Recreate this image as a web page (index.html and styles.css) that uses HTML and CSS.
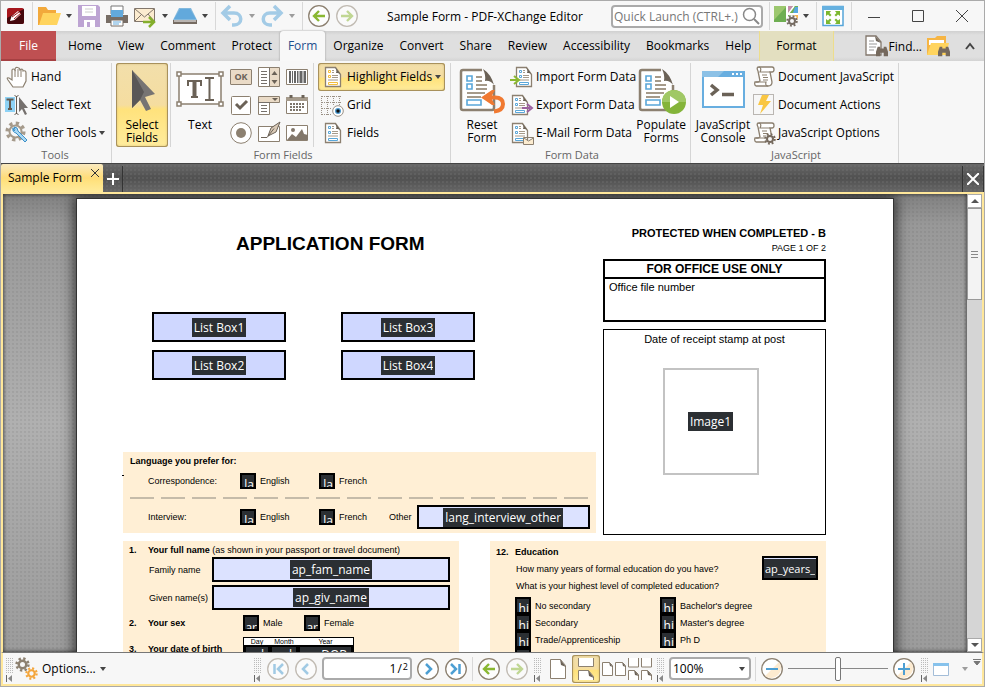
FILE: index.html
```html
<!DOCTYPE html>
<html lang="en">
<head>
    <meta charset="UTF-8">
    <meta name="viewport" content="width=device-width, initial-scale=1.0">
    <title>Sample Form - PDF-XChange Editor</title>
    <link rel="stylesheet" href="styles.css">
</head>
<body>
<!-- shared icons -->
<svg class="defs" aria-hidden="true">
    <symbol id="doc" viewBox="0 0 24 24">
        <path d="M4.500 2.500h10l5 7v12h-15z" fill="#fff" stroke="#8c8070" stroke-width="1.300"/>
        <path d="M14 2l6 8c-1-2-3-2-5-2 1-2 0-4-1-6z" fill="#6b6257"/>
        <path d="M7.500 5.500h2v2h-2zM7.500 10.500h2v2h-2zM7.500 17.500h9v2h-9z" fill="#fff" stroke="currentColor"/>
        <path d="M11 5.500h2M11 7.500h2M11 10.500h6M11 12.500h6M7 15h10" stroke="#a59a8a"/>
    </symbol>
    <symbol id="bigdoc" viewBox="0 0 48 48">
        <path d="M24 4H5q-2 0-2 2v36q0 2 2 2h29q2 0 2-2V19" fill="#fff" stroke="#8c8070" stroke-width="2.500"/>
        <path d="M25 3q8 5 11 16-4-5-9-4 1-6-2-12z" fill="#6b6257"/>
        <path d="M9 10h5v5H9zM9 18h5v5H9zM9 34h14v5H9z" fill="#fff" stroke="#5aa7d9" stroke-width="1.600"/>
        <path d="M18 11h6M18 15h6M18 19h11M18 23h11M9 27h18M9 31h14" stroke="#a59a8a" stroke-width="2"/>
    </symbol>
    <symbol id="gear" viewBox="0 0 24 24">
        <circle cx="12" cy="12" r="6" fill="none" stroke="currentColor" stroke-width="4"/>
        <circle cx="12" cy="12" r="9.500" fill="none" stroke="currentColor" stroke-width="4" stroke-dasharray="3.700 3.760"/>
    </symbol>
    <symbol id="caret" viewBox="0 0 8 8"><path d="M1 2h6L4 6z" fill="currentColor"/></symbol>
    <symbol id="binoc" viewBox="0 0 14 14"><path d="M2 2h3v2h4V2h3l2 6v5H9V9H5v4H0V8z" fill="#75695d"/></symbol>
    <symbol id="scroll" viewBox="0 0 24 24">
        <path d="M7 2h13q2 0 2 2.500T20 7h-2l2 10c0 3-2 4-4 4H4q-2-1-1-4h3l2-1L6 6Q4 2 7 2z" fill="#fff" stroke="#8c8070" stroke-width="1.300"/>
        <path d="M7 2q3 1 1 5h10M4 17h10q-1 4 2 4M10 10h5M11 12.500h5M11 15h5" fill="none" stroke="#8c8070" stroke-width="1.200"/>
    </symbol>
    <symbol id="left" viewBox="0 0 24 24">
        <circle cx="12" cy="12" r="10.300" fill="#fdfdfd" stroke="#8c8070" stroke-width="1.300"/>
        <path d="M18 12H8M12 7l-5 5 5 5" fill="none" stroke="#8ab832" stroke-width="2.400"/>
    </symbol>
    <symbol id="right" viewBox="0 0 24 24">
        <circle cx="12" cy="12" r="10.300" fill="#fdfdfd" stroke="#8c8070" stroke-width="1.300"/>
        <path d="M6 12h10M12 7l5 5-5 5" fill="none" stroke="#8ab832" stroke-width="2.400"/>
    </symbol>
    <symbol id="grip" viewBox="0 0 9 26">
        <path d="M1.500 2v16M3.500 2v16M5.500 2v16M7.500 2v16" stroke="#bbb" stroke-dasharray="1 1"/>
        <path d="M1.500 19v7" stroke="#666"/><path d="M7 19v7l-4-3.500z" fill="#888"/>
    </symbol>
</svg>

<div class="window">
    <header class="titlebar">
        <div class="quick">
            <svg class="logo" viewBox="0 0 20 20"><rect x="1" y="2" width="17" height="16" rx="2" fill="#a5161c"/><path d="M1 12L18 3v13q0 2-2 2H3q-2 0-2-2z" fill="#45080c"/><path d="M4 15l1.500-4.500L12 5l3 3-6.500 6z" fill="#fff"/><path d="M6 11l7-5M8 13l7-6" stroke="#a5161c"/></svg>
            <span class="sep"></span>
            <button class="tool" aria-label="Open"><svg viewBox="0 0 24 24"><path d="M1 3h8l2 3h8v5L3 21H1z" fill="#f2a93b"/><path d="M6 9h18l-4 12H2z" fill="#ffd45e"/></svg></button>
            <button class="drop" aria-label="Open recent"><svg><use href="#caret"/></svg></button>
            <button class="tool" aria-label="Save"><svg viewBox="0 0 24 24"><path d="M1 1h20l2 2v20H1z" fill="#bda4d3"/><path d="M5 2h14v10H5zM7 16h11v7H7z" fill="#fff"/><path d="M8 5h8M8 8h8" stroke="#ccc"/><path d="M10 18h3v5h-3z" fill="#bda4d3"/></svg></button>
            <button class="tool" aria-label="Print"><svg viewBox="0 0 24 24"><path d="M6 2h12v8H6z" fill="#fff" stroke="#777"/><path d="M1 11h22v8H1z" fill="#776d65"/><path d="M6 6h12v7H6z" fill="#62a9dc"/><path d="M6 16h12v6H6z" fill="#fff" stroke="#776d65"/><path d="M8 18h8M8 20h6" stroke="#62a9dc"/></svg></button>
            <button class="tool" aria-label="E-mail"><svg viewBox="0 0 24 24"><path d="M1.500 4.500h20v13h-20z" fill="#fcecd0" stroke="#82776c"/><path d="M2 5l9.500 8L21 5M2 17l7-7M21 17l-6-7" fill="none" stroke="#82776c"/><path d="M10 18h10M16 13l5 5-5 5" fill="none" stroke="#84af2d" stroke-width="2.500"/></svg></button>
            <button class="drop" aria-label="E-mail menu"><svg><use href="#caret"/></svg></button>
            <button class="tool" aria-label="Scan"><svg viewBox="0 0 24 24"><path d="M6 4h12l6 12v4H0v-4z" fill="#83b9dd"/><path d="M7 5h10l6 10H1z" fill="#62a9dc"/><path d="M0 16h24v4H0z" fill="#756b62"/><path d="M1 17h22" stroke="#fff"/></svg></button>
            <button class="drop" aria-label="Scan menu"><svg><use href="#caret"/></svg></button>
            <span class="sep"></span>
            <button class="tool" aria-label="Undo"><svg viewBox="0 0 24 24"><path d="M4 9h10c9 0 9 12 0 12h-2M10 2L3 9l7 7" fill="none" stroke="#a3cbe6" stroke-width="3.500"/></svg></button>
            <button class="drop dim" aria-label="Undo list"><svg><use href="#caret"/></svg></button>
            <button class="tool" aria-label="Redo"><svg viewBox="0 0 24 24"><path d="M20 9H10C1 9 1 21 10 21h2M14 2l7 7-7 7" fill="none" stroke="#a3cbe6" stroke-width="3.500"/></svg></button>
            <button class="drop dim" aria-label="Redo list"><svg><use href="#caret"/></svg></button>
            <span class="sep"></span>
            <button class="tool" aria-label="Previous view"><svg><use href="#left"/></svg></button>
            <button class="tool dim" aria-label="Next view"><svg><use href="#right"/></svg></button>
        </div>
        <div class="caption">Sample Form - PDF-XChange Editor</div>
        <div class="quick">
            <label class="search">
                <input type="text" placeholder="Quick Launch (CTRL+.)" aria-label="Quick Launch">
                <svg viewBox="0 0 18 18"><circle cx="7.500" cy="7.500" r="6" fill="none" stroke="#888" stroke-width="1.500"/><path d="M12 12l5 5" stroke="#888" stroke-width="2"/></svg>
            </label>
            <span class="sep"></span>
            <button class="tool" aria-label="Customize"><svg viewBox="0 0 24 24"><path d="M0 2h24v16H0z" fill="#6eae52"/><path d="M0 2h13L0 16z" fill="#9cc76e"/><path d="M13 2v16M13 10h11M20 2l-7 9" stroke="#fff" stroke-width="2"/><path d="M21 3h3v6h-5z" fill="#56a8e0"/><path d="M14 2h5l-5 7z" fill="#c48da9"/><path d="M19 11h5v7h-5z" fill="#f7b64d"/><circle cx="18" cy="17" r="6" fill="#f7f7f7"/><use href="#gear" x="12" y="11" width="12" height="12" color="#756b62"/></svg></button>
            <button class="drop" aria-label="Customize menu"><svg><use href="#caret"/></svg></button>
            <span class="sep"></span>
            <button class="tool" aria-label="Full screen"><svg viewBox="0 0 24 24"><path d="M2 2.500h20v19H2z" fill="#fff" stroke="#55a5d9" stroke-width="1.500"/><path d="M1 2h22v4H1z" fill="#66b1e0"/><path d="M5 7h5L8.500 9l2 2-1.500 1.500-2-2L5 12zM19 7h-5l1.500 2-2 2 1.500 1.500 2-2 2 1.500zM5 20h5l-1.500-2 2-2L9 14.500l-2 2L5 15zM19 20h-5l1.500-2-2-2 1.500-1.500 2 2 2-1.500z" fill="#7cb82f"/></svg></button>
            <span class="sep"></span>
            <div class="wincontrols">
                <button aria-label="Minimize"><svg viewBox="0 0 12 12"><path d="M0 7.500h12"/></svg></button>
                <button aria-label="Maximize"><svg viewBox="0 0 12 12"><path d="M.5.5h11v11H.5z"/></svg></button>
                <button aria-label="Close"><svg viewBox="0 0 12 12"><path d="M0 0l12 12M12 0L0 12"/></svg></button>
            </div>
        </div>
    </header>

    <nav class="tabs">
        <button class="file">File</button>
        <button>Home</button>
        <button>View</button>
        <button>Comment</button>
        <button>Protect</button>
        <button class="active">Form</button>
        <button>Organize</button>
        <button>Convert</button>
        <button>Share</button>
        <button>Review</button>
        <button>Accessibility</button>
        <button>Bookmarks</button>
        <button>Help</button>
        <button class="format">Format</button>
        <div class="tabs-end">
            <button class="find"><svg viewBox="0 0 24 24"><path d="M2 2h10l5 6v13H2z" fill="#fff" stroke="#82776c" stroke-width="1.300"/><path d="M11 2l6 7-5-2z" fill="#6b6257"/><path d="M5 7h5M5 10h8M5 13h7M5 16h5" stroke="#999"/><use href="#binoc" x="12" y="11" width="12" height="12"/></svg>Find...</button>
            <button aria-label="Find in files"><svg viewBox="0 0 24 24"><path d="M1 4h8l2-2h9v19H1z" fill="#f6b544"/><path d="M3 6h15v5H3z" fill="#fff"/><path d="M5 9h18l-3 12H1z" fill="#ffd45e"/><use href="#binoc" x="12" y="11" width="12" height="12"/></svg></button>
            <button class="collapse" aria-label="Collapse ribbon"><svg viewBox="0 0 24 24"><path d="M8 15l4-5 4 5" fill="none" stroke="#444" stroke-width="2"/></svg></button>
        </div>
    </nav>

    <section class="ribbon">
        <div class="group tools">
            <div class="cmds">
                <div class="stack">
                    <button class="cmd"><svg viewBox="0 0 24 24"><path d="M8 22L3 15q-2-3 1-2l3 2V5q1-2 3 0 0-3 2.500-2.500T15 5q3-2 3 1 3-1 3 2v8l-3 6z" fill="#fff" stroke="#8c8070" stroke-width="1.200"/><path d="M10 5v7M13 4v8M16 5v7" stroke="#8c8070"/></svg>Hand</button>
                    <button class="cmd"><svg viewBox="0 0 24 24"><path d="M0 4h10v15H0z" fill="#8ed2f5"/><path d="M1.500 6.500h7M5 7v9M3 16h4" stroke="#635b52" stroke-width="2"/><path d="M11.500 3v18M9.500 2.500l2 1 2-1M9.500 21.500l2-1 2 1" fill="none" stroke="#635b52"/><path d="M14 4v15l3-3 3 6 2-1-3-6h4z" fill="#75706d"/></svg>Select Text</button>
                    <button class="cmd"><svg viewBox="0 0 24 24"><use href="#gear" width="21" height="21" color="#a59a8b"/><circle cx="10.500" cy="10.500" r="5" fill="#f7f7f7"/><path d="M8 7q-1 4 3 5l9 9 2-2-9-9q0-4-4-4l1 3-1 1z" fill="#a9d8f4" stroke="#3d90c8"/></svg>Other Tools<svg class="arrow"><use href="#caret"/></svg></button>
                </div>
            </div>
            <div class="group-name">Tools</div>
        </div>

        <div class="group fields">
            <div class="cmds">
                <button class="big select on"><svg viewBox="0 0 48 48"><path d="M14 4v38l8-8 6 11 5-2-6-12 10-3z" fill="#777473"/><path d="M14 4v38l8-8 4-8z" fill="#5a5757"/></svg><span>Select<br>Fields</span></button>
                <span class="vsep"></span>
                <button class="big text"><svg viewBox="0 0 48 48"><path d="M3 8h42v30H3z" fill="#fff" stroke="#8c8070" stroke-width="1.500"/><path d="M12 15h13M12 14v6M25 14v6" stroke="#6b6257" stroke-width="2"/><path d="M18.500 15v16" stroke="#6b6257" stroke-width="4"/><path d="M15 31h7" stroke="#6b6257" stroke-width="2"/><path d="M33.500 12v22M29 12h9M29 34h9" stroke="#6b6257" stroke-width="2"/><path d="M1 6h4v4H1zM43 6h4v4h-4zM1 36h4v4H1zM43 36h4v4h-4z" fill="#fff" stroke="#8c8070" stroke-width="1.500"/></svg><span>Text</span></button>
                <div class="palette">
                    <button class="okicon" aria-label="Button"><span>OK</span></button>
                    <button aria-label="List box"><svg viewBox="0 0 24 24"><path d="M1.500 2.500h21v19h-21z" fill="#fff" stroke="#8c8070"/><path d="M13 3h9v18h-9z" fill="#eadbc7"/><path d="M12.500 3v18M4 6.500h6M4 9.500h6M4 12.500h6M4 15.500h6M4 18.500h6" stroke="#75706b"/><path d="M17.500 6l3 4h-6zM17.500 19l3-4h-6z" fill="#6b6257"/></svg></button>
                    <button aria-label="Barcode"><svg viewBox="0 0 24 24"><path d="M1.500 4.500h21v15h-21z" fill="#fff" stroke="#8c8070"/><path d="M5 6v12M10 6v12M16 6v12M20 6v12" stroke="#666" stroke-width="2"/><path d="M7.500 6v12M12.500 6v12M14 6v12M18 6v12" stroke="#666"/></svg></button>
                    <button aria-label="Check box"><svg viewBox="0 0 24 24"><rect x="2.500" y="3.500" width="19" height="18" rx="1" fill="#fff" stroke="#8c8070"/><path d="M7 11l4 4 7-7" fill="none" stroke="#6b6257" stroke-width="3"/></svg></button>
                    <button aria-label="Dropdown"><svg viewBox="0 0 24 24"><path d="M1.500 3.500h21v6h-10v12h-11z" fill="#fff" stroke="#8c8070"/><path d="M2 4h20v5H2z" fill="#eadbc7"/><path d="M15 5h6l-3 3z" fill="#6b6257"/><path d="M1 9.500h12M4 12.500h6M4 15.500h6M4 18.500h6" stroke="#75706b"/></svg></button>
                    <button aria-label="Date"><svg viewBox="0 0 24 24"><path d="M1.500 4.500h21v16h-21z" fill="#fff" stroke="#8c8070"/><path d="M1 4h22v4H1z" fill="#a59a8b"/><path d="M5 11h14M5 14h14M5 17h12" stroke="#7e766c" stroke-width="2" stroke-dasharray="2 1"/><path d="M6 2v3M18 2v3" stroke="#6b6257" stroke-width="3"/></svg></button>
                    <button aria-label="Radio button"><svg viewBox="0 0 24 24"><circle cx="12" cy="12" r="10.300" fill="#fff" stroke="#8c8070"/><circle cx="12" cy="12" r="5" fill="#8c8070"/></svg></button>
                    <button aria-label="Signature"><svg viewBox="0 0 24 24"><path d="M1.500 5.500h21v15h-21z" fill="#fff" stroke="#8c8070"/><path d="M11 15l3-8 9-6-4 10-8 4z" fill="#d9c9b6" stroke="#6b6257"/><path d="M4 16.500h6l7-9" fill="none" stroke="#6b6257"/></svg></button>
                    <button aria-label="Image"><svg viewBox="0 0 24 24"><path d="M1.500 4.500h21v15h-21z" fill="#fff" stroke="#8c8070"/><path d="M2 19l5-6 4 3 6-8 2 5 4 1v5z" fill="#82776b"/><circle cx="8" cy="9" r="2" fill="#82776b"/></svg></button>
                </div>
                <span class="vsep"></span>
                <div class="stack view-fields">
                    <button class="cmd on"><svg class="gold"><use href="#doc"/></svg>Highlight Fields<svg class="arrow"><use href="#caret"/></svg></button>
                    <button class="cmd"><svg viewBox="0 0 24 24"><path d="M1 3.500h19M1 9.500h19M1 15.500h10M.5 3v19M6.500 3v19M12.500 3v10M18.500 3v9M1 21.500h10" stroke="#9a9186" stroke-dasharray="1 1"/><circle cx="17" cy="18" r="5.300" fill="#fff" stroke="#9a9186"/><circle cx="17" cy="18" r="3" fill="#4b9ad1"/><circle cx="17" cy="18" r="1.700" fill="#111"/></svg>Grid</button>
                    <button class="cmd"><svg class="blue"><use href="#doc"/></svg>Fields</button>
                </div>
            </div>
            <div class="group-name">Form Fields</div>
        </div>

        <div class="group data">
            <div class="cmds">
                <button class="big"><svg viewBox="0 0 48 48"><use href="#bigdoc"/><path d="M32 31.500h5q8 0 8 6.500t-9 7.500" fill="none" stroke="#f07931" stroke-width="4"/><path d="M23 31.500L34 24h3l-4 7.500 4 7.500h-3z" fill="#f07931"/></svg><span>Reset<br>Form</span></button>
                <div class="stack">
                    <button class="cmd"><svg class="blue" viewBox="0 0 24 24"><use href="#doc" x="2" width="24" height="24"/><path d="M0 15h8M4 11l5 4-5 4" fill="none" stroke="#8ab832" stroke-width="2"/></svg>Import Form Data</button>
                    <button class="cmd"><svg class="blue" viewBox="0 0 24 24"><use href="#doc" x="-2" width="24" height="24"/><path d="M12 15h8M17 11l5 4-5 4" fill="none" stroke="#9c61a0" stroke-width="2"/></svg>Export Form Data</button>
                    <button class="cmd"><svg class="blue" viewBox="0 0 24 24"><use href="#doc" x="-2" width="24" height="24"/><path d="M13.500 16.500h10v7h-10zM14 17l4.500 3 5-3" fill="#fcecd0" stroke="#8c8070"/></svg>E-Mail Form Data</button>
                </div>
                <button class="big populate"><svg viewBox="0 0 48 48"><use href="#bigdoc"/><circle cx="37" cy="36" r="12" fill="#84b43a"/><path d="M25 36a12 12 0 0 1 24 0z" fill="#a0c865"/><path d="M33 30l9 6-9 6z" fill="#fff"/></svg><span>Populate<br>Forms</span></button>
            </div>
            <div class="group-name">Form Data</div>
        </div>

        <div class="group script">
            <div class="cmds">
                <button class="big"><svg viewBox="0 0 48 48"><path d="M4 6h41v35H4z" fill="#fff" stroke="#68aee0" stroke-width="2"/><path d="M3 5h43v6H3z" fill="#68aee0"/><path d="M3 5h22l-6 6H3z" fill="#8cc1e6"/><path d="M33 8h10" stroke="#fff" stroke-width="2" stroke-dasharray="2 2"/><path d="M12 19l6 5-6 5M23 28.500h12" fill="none" stroke="#6b6257" stroke-width="3.500"/></svg><span>JavaScript<br>Console</span></button>
                <div class="stack">
                    <button class="cmd"><svg><use href="#scroll"/></svg>Document JavaScript</button>
                    <button class="cmd"><svg viewBox="0 0 24 24"><path d="M1.500 1.500h20v20h-20z" fill="none" stroke="#7d756d" stroke-dasharray="1 1"/><path d="M10 2h7l-3 6h5L8 21l3-9H6z" fill="#f9c642"/></svg>Document Actions</button>
                    <button class="cmd"><svg viewBox="0 0 24 24"><use href="#scroll"/><circle cx="18" cy="18" r="5" fill="#f7f7f7"/><use href="#gear" x="12" y="12" width="12" height="12" color="#75695d"/></svg>JavaScript Options</button>
                </div>
            </div>
            <div class="group-name">JavaScript</div>
        </div>
    </section>

    <div class="doctabs">
        <div class="doctab">Sample Form<button aria-label="Close tab"><svg viewBox="0 0 8 8"><path d="M0 0l8 8M8 0L0 8" stroke="#333"/></svg></button></div>
        <button class="newtab" aria-label="New tab"><svg viewBox="0 0 12 12"><path d="M6 0v12M0 6h12" stroke="#fff" stroke-width="2"/></svg></button>
        <button class="closeall" aria-label="Close document"><svg viewBox="0 0 12 12"><path d="M0 0l12 12M12 0L0 12" stroke="#fff" stroke-width="2"/></svg></button>
    </div>

    <main class="workspace">
        <div class="canvas">
            <article class="page">
                <div class="top">
                    <div class="intro">
                        <h1>APPLICATION FORM</h1>
                        <div class="lists">
                            <div class="field"><input readonly value="List Box1" aria-label="List Box1"></div>
                            <div class="field"><input readonly value="List Box3" aria-label="List Box3"></div>
                            <div class="field"><input readonly value="List Box2" aria-label="List Box2"></div>
                            <div class="field"><input readonly value="List Box4" aria-label="List Box4"></div>
                        </div>
                        <section class="panel language">
                            <h2>Language you prefer for:</h2>
                            <div class="lang-row">
                                <span>Correspondence:</span>
                                <label class="check"><span class="box"><input type="checkbox"><b>la</b></span>English</label>
                                <label class="check"><span class="box"><input type="checkbox"><b>la</b></span>French</label>
                            </div>
                            <div class="dashes"></div>
                            <div class="lang-row">
                                <span>Interview:</span>
                                <label class="check"><span class="box"><input type="checkbox"><b>la</b></span>English</label>
                                <label class="check"><span class="box"><input type="checkbox"><b>la</b></span>French</label>
                                <label for="other">Other</label>
                                <div class="field"><input id="other" readonly value="lang_interview_other"></div>
                            </div>
                        </section>
                    </div>
                    <aside class="office">
                        <p class="protected">PROTECTED WHEN COMPLETED - B</p>
                        <p class="pageno">PAGE 1 OF 2</p>
                        <div class="filebox">
                            <h2>FOR OFFICE USE ONLY</h2>
                            <p>Office file number</p>
                        </div>
                        <div class="stamp">
                            <p>Date of receipt stamp at post</p>
                            <div class="image"><span>Image1</span></div>
                        </div>
                    </aside>
                </div>

                <div class="bottom">
                    <section class="panel personal">
                        <p class="line"><b>1.</b><span><b>Your full name</b> (as shown in your passport or travel document)</span></p>
                        <div class="name-row">
                            <label for="fam">Family name</label>
                            <div class="field"><input id="fam" readonly value="ap_fam_name"></div>
                        </div>
                        <div class="name-row">
                            <label for="giv">Given name(s)</label>
                            <div class="field"><input id="giv" readonly value="ap_giv_name"></div>
                        </div>
                        <div class="line sex">
                            <b>2.</b><b>Your sex</b>
                            <label class="check"><span class="box"><input type="checkbox"><b>ar</b></span>Male</label>
                            <label class="check"><span class="box"><input type="checkbox"><b>ar</b></span>Female</label>
                        </div>
                        <div class="line birth">
                            <b>3.</b><b>Your date of birth</b>
                            <div class="date">
                                <label for="day">Day</label><label for="month">Month</label><label for="year">Year</label>
                                <input id="day" readonly value="d"><input id="month" readonly value="d"><input id="year" readonly value="DOB">
                            </div>
                        </div>
                    </section>
                    <section class="panel education">
                        <div class="questions">
                            <div>
                                <p class="line"><b>12.</b><b>Education</b></p>
                                <p class="question"><label for="years">How many years of formal education do you have?</label></p>
                                <p class="question">What is your highest level of completed education?</p>
                            </div>
                            <div class="field years"><input id="years" readonly value="ap_years_"></div>
                        </div>
                        <div class="levels">
                            <label class="check"><span class="box"><input type="checkbox"><b>hi</b></span>No secondary</label>
                            <label class="check"><span class="box"><input type="checkbox"><b>hi</b></span>Bachelor's degree</label>
                            <label class="check"><span class="box"><input type="checkbox"><b>hi</b></span>Secondary</label>
                            <label class="check"><span class="box"><input type="checkbox"><b>hi</b></span>Master's degree</label>
                            <label class="check"><span class="box"><input type="checkbox"><b>hi</b></span>Trade/Apprenticeship</label>
                            <label class="check"><span class="box"><input type="checkbox"><b>hi</b></span>Ph D</label>
                            <label class="check"><span class="box"><input type="checkbox"></span></label>
                        </div>
                    </section>
                </div>
            </article>
        </div>
        <div class="scrollbar">
            <button aria-label="Scroll up"><svg viewBox="0 0 8 8"><path d="M4 2l4 4H0z" fill="#555"/></svg></button>
            <div class="track"><div class="thumb"></div></div>
            <button aria-label="Scroll down"><svg viewBox="0 0 8 8"><path d="M0 2h8L4 6z" fill="#555"/></svg></button>
        </div>
    </main>

    <footer class="status">
        <svg class="grip"><use href="#grip"/></svg>
        <button class="options"><svg viewBox="0 0 24 24"><use href="#gear" width="15" height="15" color="#8c8070"/><use href="#gear" x="10" y="10" width="13" height="13" color="#f4a63c"/></svg>Options...<svg class="arrow"><use href="#caret"/></svg></button>
        <div class="nav">
            <svg class="grip"><use href="#grip"/></svg>
            <button class="dim" aria-label="First page"><svg viewBox="0 0 24 24"><circle cx="12" cy="12" r="10.300" fill="#fff" stroke="#8c8070" stroke-width="1.300"/><path d="M8.500 7v10M17 7l-5 5 5 5" fill="none" stroke="#4d9fd3" stroke-width="2.500"/></svg></button>
            <button class="dim" aria-label="Previous page"><svg viewBox="0 0 24 24"><circle cx="12" cy="12" r="10.300" fill="#fff" stroke="#8c8070" stroke-width="1.300"/><path d="M14 7l-5 5 5 5" fill="none" stroke="#4d9fd3" stroke-width="2.500"/></svg></button>
            <label class="pagebox"><input type="text" value="1" aria-label="Page"><span>/</span><sup>2</sup></label>
            <button aria-label="Next page"><svg viewBox="0 0 24 24"><circle cx="12" cy="12" r="10.300" fill="#fff" stroke="#8c8070" stroke-width="1.300"/><path d="M10 7l5 5-5 5" fill="none" stroke="#4d9fd3" stroke-width="2.500"/></svg></button>
            <button aria-label="Last page"><svg viewBox="0 0 24 24"><circle cx="12" cy="12" r="10.300" fill="#fff" stroke="#8c8070" stroke-width="1.300"/><path d="M7 7l5 5-5 5M15.500 7v10" fill="none" stroke="#4d9fd3" stroke-width="2.500"/></svg></button>
            <span class="sep"></span>
            <button aria-label="Back"><svg><use href="#left"/></svg></button>
            <button class="dim" aria-label="Forward"><svg><use href="#right"/></svg></button>
        </div>
        <div class="layout">
            <svg class="grip"><use href="#grip"/></svg>
            <div class="pagemodes">
                <button aria-label="Single page"><svg viewBox="0 0 24 24"><path d="M4.500 2.500h10l5 6v13h-15z" fill="#fff" stroke="#8c8070"/><path d="M14 2l6 8-5-2z" fill="#6b6257"/></svg></button>
                <button class="on" aria-label="Continuous"><svg viewBox="0 0 24 24"><path d="M4.500 1v8.500h15V1M4.500 23V13.500h10l5 6V23" fill="#fff" stroke="#8c8070"/><path d="M14 13l6 8-5-2z" fill="#6b6257"/></svg></button>
                <button aria-label="Two pages"><svg viewBox="0 0 24 24"><path d="M.5 5.500h7l3 3v10H.5zM13.500 5.500h7l3 3v10h-10z" fill="#fff" stroke="#8c8070"/><path d="M7 5l4 5-3-1zM20 5l4 5-3-1z" fill="#6b6257"/></svg></button>
                <button aria-label="Two pages continuous"><svg viewBox="0 0 24 24"><path d="M.5 1v9h10V1M13.500 1v9h10V1M.5 23v-9.500h6l4 4V23M13.500 23v-9.500h6l4 4V23" fill="#fff" stroke="#8c8070"/><path d="M6 13l5 6-4-1zM19 13l5 6-4-1z" fill="#6b6257"/></svg></button>
            </div>
            <svg class="grip"><use href="#grip"/></svg>
            <div class="zoom"><select aria-label="Zoom"><option>100%</option></select><svg class="arrow"><use href="#caret"/></svg></div>
            <span class="sep"></span>
            <button aria-label="Zoom out"><svg viewBox="0 0 24 24"><circle cx="12" cy="12" r="10.300" fill="#fff" stroke="#8c8070" stroke-width="1.300"/><path d="M19 5A10 10 0 0 1 5 19z" fill="#fdebd0"/><path d="M6 12h12" stroke="#4d9fd3" stroke-width="2"/></svg></button>
            <input class="slider" type="range" aria-label="Zoom level">
            <button aria-label="Zoom in"><svg viewBox="0 0 24 24"><circle cx="12" cy="12" r="10.300" fill="#fff" stroke="#8c8070" stroke-width="1.300"/><path d="M19 5A10 10 0 0 1 5 19z" fill="#fdebd0"/><path d="M6 12h12M12 6v12" stroke="#4d9fd3" stroke-width="2"/></svg></button>
            <svg class="grip"><use href="#grip"/></svg>
            <button aria-label="Panes"><svg viewBox="0 0 24 24"><path d="M.5 6.500h15v12H.5z" fill="#fff" stroke="#a3bdd8"/><path d="M0 6h16v3H0z" fill="#86c2ec"/></svg></button>
            <svg class="arrow dim"><use href="#caret"/></svg>
            <svg class="overflow" viewBox="0 0 8 24"><path d="M0 2.500h8M1 4.500h6L4 8z" fill="#777" stroke="#777"/></svg>
        </div>
    </footer>
</div>
</body>
</html>
```

FILE: styles.css
```css
* {
    box-sizing: border-box;
}
body {
    margin: 0;
    font-family: "Open Sans", "Noto Sans", sans-serif;
    font-size: 12px;
    color: #000;
}
button, input, select {
    font: inherit;
    color: inherit;
    margin: 0;
    padding: 0;
    border: 0;
    background: none;
}
h1, h2, p {
    margin: 0;
}
svg {
    display: block;
    width: 24px;
    height: 24px;
    flex: none;
}
.defs {
    display: none;
}
.window {
    display: flex;
    flex-direction: column;
    height: 100vh;
    overflow: hidden;
    border: 1px solid #aaa;
    background: #f7f7f7;
}

/* title bar */
.titlebar {
    display: flex;
    align-items: center;
    height: 30px;
}
.quick {
    display: flex;
    align-items: center;
    gap: 4px;
}
.quick .logo {
    width: 20px;
    height: 20px;
    margin-left: 5px;
}
.sep {
    width: 1px;
    height: 28px;
    margin-left: 2px;
    background: #d8d8d8;
}
.drop svg, svg.arrow {
    width: 8px;
    height: 8px;
    color: #444;
}
.dim {
    opacity: 0.5;
}
.caption {
    flex: 1;
    text-align: center;
    white-space: nowrap;
}
.search {
    display: flex;
    align-items: center;
    width: 152px;
    height: 23px;
    padding: 0 1px;
    border: 2px solid #aaa;
    border-radius: 4px;
    background: #fff;
}
.search input {
    flex: 1;
    min-width: 0;
    outline: 0;
}
.search input::placeholder {
    color: #777;
}
.search svg {
    width: 18px;
    height: 18px;
}
.wincontrols {
    display: flex;
    margin-left: -4px;
}
.wincontrols button {
    display: flex;
    align-items: center;
    justify-content: center;
    width: 44px;
    height: 28px;
}
.wincontrols svg {
    width: 12px;
    height: 12px;
    fill: none;
    stroke: #444;
}

/* ribbon tabs */
.tabs {
    display: flex;
    height: 30px;
    background: linear-gradient(#d0d0d0, #dfdfdf 4px, #dfdfdf 26px, #d3d3d3);
}
.tabs button {
    padding: 0 8px 2px;
}
.tabs .file {
    width: 55px;
    margin-right: 4px;
    background: #bf5052;
    border-bottom: 2px solid #a64042;
    color: #fff;
    padding-bottom: 0;
}
.tabs .active {
    background: #f8f8f8;
    color: #1e4e8c;
    border-radius: 3px 3px 0 0;
    box-shadow: 0 0 2px #888;
    clip-path: inset(-2px -2px 0);
}
.tabs .format {
    padding: 0 16px 2px;
    background: #e3dfc0;
    border: 1px solid #eddd8c;
    border-width: 0 1px;
}
.tabs-end {
    display: flex;
    margin-left: auto;
    padding-right: 2px;
}
.tabs-end button {
    display: flex;
    align-items: center;
    gap: 1px;
    padding: 0 2px;
}
.tabs-end .collapse {
    padding-left: 6px;
    padding-right: 0;
}

/* ribbon */
.ribbon {
    display: flex;
    height: 102px;
    padding-top: 2px;
    background: #f7f7f7;
}
.group {
    display: flex;
    flex-direction: column;
    border-right: 1px solid #d5d5d5;
}
.tools {
    width: 111px;
    padding-left: 4px;
}
.fields {
    width: 339px;
    padding-left: 4px;
}
.data {
    width: 240px;
    padding-left: 3px;
}
.script {
    width: 208px;
    padding-left: 3px;
}
.cmds {
    display: flex;
    height: 84px;
}
.group-name {
    line-height: 16px;
    text-align: center;
    font-size: 11px;
    color: #666;
}
.tools .group-name {
    padding-right: 6px;
}
.stack {
    display: flex;
    flex-direction: column;
}
.cmd {
    display: flex;
    align-items: center;
    gap: 2px;
    height: 28px;
    padding-bottom: 1px;
    white-space: nowrap;
}
.tools .arrow {
    margin-left: -1px;
}
.blue {
    color: #5aa7d9;
}
.gold {
    color: #f4be3c;
}
.big {
    display: flex;
    flex-direction: column;
    align-items: center;
    gap: 4px;
    width: 58px;
    padding-top: 3px;
    line-height: 13px;
}
.big svg {
    width: 48px;
    height: 48px;
    overflow: visible;
}
.big.select {
    width: 52px;
}
.data .big {
    width: 56px;
}
.data .populate {
    width: 50px;
}
.on {
    border-radius: 3px;
    background: linear-gradient(#f2dfab, #f5dda0 50%, #ffe27c 55%, #ffec9d);
    box-shadow: inset 0 0 0 1px #a8915c, inset 0 0 3px #b39b60;
}
.vsep {
    width: 1px;
    margin: 0 2px;
    background: #d5d5d5;
}
.big.text {
    width: 54px;
}
.palette {
    display: grid;
    grid-template-columns: repeat(3, 28px);
    grid-auto-rows: 28px;
}
.palette button {
    display: flex;
    align-items: center;
    justify-content: center;
}
.okicon span {
    width: 22px;
    height: 16px;
    border: 1px solid #8c8070;
    border-radius: 1px;
    background: #eadbc7;
    color: #6b6257;
    font-size: 9px;
    font-weight: bold;
    line-height: 14px;
}
.view-fields {
    width: 127px;
    margin-left: 2px;
}
.view-fields .cmd {
    padding-left: 3px;
}

/* document tabs */
.doctabs {
    display: flex;
    height: 29px;
    padding-top: 2px;
    color: #000;
    border-top: 1px solid #444;
    background:
        radial-gradient(circle, rgba(120, 120, 120, 0.3) 1px, transparent 1px) 0 0 / 4px 4px,
        linear-gradient(#686868, #505050 50%, #666);
}
.doctab {
    display: flex;
    justify-content: space-between;
    width: 102px;
    padding: 5px 4px 0 7px;
    margin-top: -2px;
    border-radius: 2px 2px 0 0;
    background: linear-gradient(#faeac0, #ffdc78 50%, #ffe382 65%, #ffeb9c);
    white-space: nowrap;
}
.doctab button {
    align-self: flex-start;
}
.doctab svg {
    width: 8px;
    height: 8px;
}
.newtab, .closeall {
    display: flex;
    align-items: center;
    justify-content: center;
    width: 20px;
    border-right: 1px solid #333;
}
.closeall {
    width: 22px;
    margin-left: auto;
    border-left: 1px solid #333;
}
.newtab svg, .closeall svg {
    width: 12px;
    height: 12px;
}

/* page view */
.workspace {
    display: flex;
    flex: 1;
    min-height: 0;
    border: 2px solid #ffe79a;
    border-bottom: 0;
}
.canvas {
    flex: 1;
    overflow: hidden;
    padding-top: 5px;
    background:
        radial-gradient(circle, rgba(70, 70, 70, 0.1) 1px, transparent 1px) 0 0 / 4px 4px,
        linear-gradient(#808080, #989898 30px, #b0b0b0 50%, #9b9b9b);
    box-shadow: inset 0 0 4px #222;
}
.page {
    display: flow-root;
    width: 816px;
    height: 1056px;
    margin: 0 auto;
    padding: 0 66px 0 46px;
    background: #fff;
    box-shadow: 0 0 0 1px #333, 0 0 12px 3px rgba(0, 0, 0, 0.65);
    font-family: "Liberation Sans", Arial, sans-serif;
    font-size: 9px;
    line-height: 12px;
}
.top {
    display: flex;
    justify-content: space-between;
    padding-right: 1px;
}
.intro {
    width: 473px;
}
h1 {
    margin: 33px 0 56px 113px;
    font-size: 19px;
    line-height: 24px;
}
.lists {
    display: grid;
    grid-template-columns: 134px 134px;
    gap: 8px 55px;
    padding-left: 29px;
}
.field {
    display: flex;
    align-items: center;
    justify-content: center;
    height: 24px;
    overflow: hidden;
    border: 2px solid #000;
    background: #dce2ff;
}
.lists .field {
    height: 30px;
    background: #cfd7ff;
}
.field input, .image span {
    height: 19px;
    padding: 0 2px;
    background: #2b2f33;
    color: #fff;
    font-family: "Open Sans", "Noto Sans", sans-serif;
    font-size: 12px;
    line-height: 19px;
    field-sizing: content;
}
.panel {
    background: #ffefd5;
}
.panel h2 {
    font-size: 9px;
}
.language {
    position: relative;
    margin-top: 72px;
    padding: 3px 7px 4px;
}
/* stray fold mark on the panel's left edge */
.language::before {
    content: "";
    position: absolute;
    left: -1px;
    top: 23px;
    width: 2px;
    height: 1px;
    background: #000;
}
.lang-row {
    display: flex;
    align-items: center;
    height: 24px;
    margin-top: 2px;
    padding-left: 18px;
}
.lang-row > span {
    width: 92px;
}
.lang-row .check {
    width: 79px;
}
.lang-row .check + .check {
    width: 70px;
}
.lang-row .field {
    flex: 1;
    margin: 0 -1px 0 5px;
}
.dashes {
    height: 2px;
    margin: 4px 0 6px;
    background: repeating-linear-gradient(90deg, #c5bba9 0 24px, transparent 24px 31px);
}
.dashes + .lang-row {
    margin-top: 0;
}
.check {
    display: flex;
    align-items: center;
    gap: 4px;
}
.box {
    display: grid;
    width: 16px;
    height: 16px;
    overflow: hidden;
}
.box input, .box b {
    grid-area: 1 / 1;
}
.box input {
    appearance: none;
    width: 16px;
    height: 100%;
    border: 2px solid #000;
    background: #2b2f33;
}
.box b {
    margin: 5px 2px 2px;
    overflow: hidden;
    color: #fff;
    font: 12px/14px "Open Sans", "Noto Sans", sans-serif;
    text-align: right;
}
.office {
    width: 223px;
    padding-top: 26px;
}
.protected {
    font-size: 11px;
    font-weight: bold;
    line-height: 16px;
    text-align: right;
}
.pageno {
    line-height: 14px;
    text-align: right;
}
.filebox {
    height: 63px;
    margin-top: 4px;
    border: 2px solid #000;
    font-size: 11px;
}
.filebox h2 {
    border-bottom: 2px solid #000;
    font-size: 12px;
    line-height: 16px;
    text-align: center;
}
.filebox p {
    padding: 2px 4px;
}
.stamp {
    display: flex;
    flex-direction: column;
    align-items: center;
    height: 206px;
    margin-top: 7px;
    padding-top: 3px;
    border: 1px solid #000;
    font-size: 11px;
}
.image {
    display: flex;
    align-items: center;
    justify-content: center;
    width: 96px;
    height: 107px;
    margin: 23px 8px 0 0;
    border: 2px solid #c3c3c3;
}
.bottom {
    display: grid;
    grid-template-columns: 336px 336px;
    gap: 31px;
    margin-top: 6px;
}
.panel.personal, .panel.education {
    height: 300px;
    padding: 3px 9px 0 6px;
}
.line {
    display: flex;
}
.line > b:first-child {
    width: 19px;
}
.name-row {
    display: flex;
    align-items: center;
    height: 25px;
    margin: 1px 0 3px 20px;
}
.name-row + .name-row {
    margin-top: 0;
}
.name-row label {
    width: 63px;
}
.name-row .field {
    flex: 1;
    height: 25px;
}
.sex {
    align-items: center;
    margin-top: 5px;
}
.sex b + b {
    width: 95px;
}
.sex .check {
    width: 61px;
}
.sex .box b {
    margin-top: 6px;
}
.birth {
    margin-top: 6px;
}
.birth > b {
    padding-top: 6px;
}
.birth b + b {
    width: 95px;
}
.date {
    display: grid;
    grid-template-columns: 26px 28px 1fr;
    grid-template-rows: 7px 24px;
    width: 111px;
    border: 1px solid #000;
    background: #fff;
    font-size: 7px;
    line-height: 7px;
    text-align: center;
}
.date input {
    width: 100%;
    padding: 0 4px 4px 0;
    border: 2px solid #000;
    background: #2b2f33;
    color: #fff;
    font: 12px/14px "Open Sans", "Noto Sans", sans-serif;
    text-align: right;
}
.questions {
    display: flex;
    justify-content: space-between;
    line-height: 17px;
}
.question {
    padding-left: 20px;
}
.years {
    width: 56px;
    margin: 12px -1px 0 0;
}
.years input {
    font-size: 11px;
}
.levels {
    display: grid;
    grid-template-columns: 145px 1fr;
    grid-auto-rows: 17px;
    padding: 2px 0 0 19px;
}
.levels .box {
    height: 17px;
}

/* scroll bar */
.scrollbar {
    display: flex;
    flex-direction: column;
    width: 15px;
    background: #d5d5d5;
}
.scrollbar button {
    display: flex;
    align-items: center;
    justify-content: center;
    height: 14px;
    border: 1px solid #aaa;
    background: #fff;
}
.scrollbar svg {
    width: 8px;
    height: 8px;
}
.track {
    flex: 1;
}
.thumb {
    height: 92px;
    border: 1px solid #999;
    background:
        repeating-linear-gradient(#888 0 1px, transparent 1px 3px) center / 7px 7px no-repeat,
        #f3f3f3;
}

/* status bar */
.status {
    display: flex;
    align-items: center;
    height: 34px;
    padding: 0 1px 0 2px;
    border: 2px solid #ffe79a;
    border-top: 1px solid #777;
    background: #f7f7f7;
}
.status button, .nav, .layout, .pagemodes {
    display: flex;
    align-items: center;
}
.status .grip {
    width: 9px;
    height: 26px;
}
.options {
    gap: 3px;
    margin-left: 1px;
}
.nav {
    gap: 4px;
    margin-left: auto;
}
.nav .sep, .layout .sep {
    height: 24px;
    margin: 0;
}
.pagebox {
    display: flex;
    align-items: center;
    width: 90px;
    height: 23px;
    padding-right: 2px;
    border: 2px solid #aaa;
    border-radius: 4px;
    background: #fff;
}
.pagebox input {
    flex: 1;
    min-width: 0;
    text-align: right;
}
.pagebox span {
    padding: 0 1px;
}
.pagebox sup {
    align-self: flex-start;
    font-size: 9px;
    line-height: 16px;
}
.layout {
    gap: 4px;
    margin-left: 4px;
}
.pagemodes {
    gap: 2px;
}
.pagemodes .on {
    height: 28px;
    padding: 0 2px;
}
.zoom {
    position: relative;
}
.zoom select {
    appearance: none;
    width: 82px;
    height: 23px;
    padding-left: 2px;
    border: 2px solid #aaa;
    border-radius: 4px;
    background: #fff;
}
.zoom .arrow {
    position: absolute;
    right: 5px;
    top: 8px;
}
.slider {
    appearance: none;
    width: 100px;
    height: 24px;
    background: linear-gradient(#888, #888) center / 100% 1px no-repeat;
}
.slider::-webkit-slider-thumb {
    appearance: none;
    width: 6px;
    height: 24px;
    border: 1px solid #777;
    border-radius: 2px;
    background: #fff;
}
.status .overflow {
    width: 8px;
}
```
